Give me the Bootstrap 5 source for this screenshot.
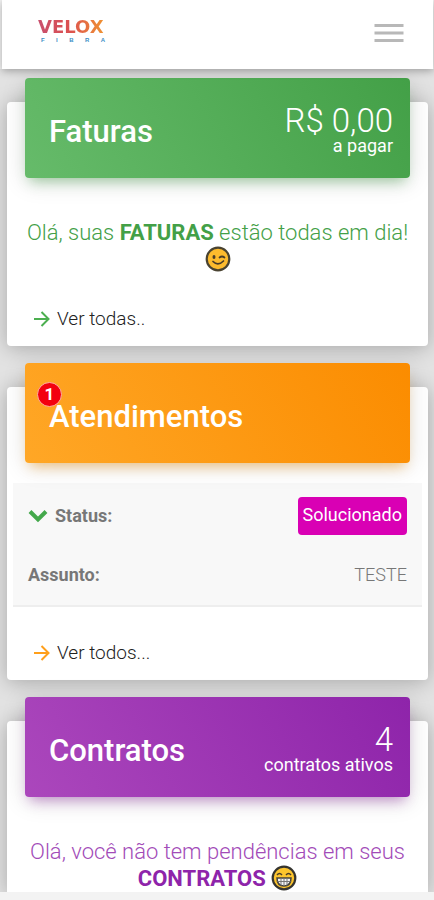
<!DOCTYPE html>
<html lang="pt-BR">
<head>
<meta charset="utf-8">
<meta name="viewport" content="width=device-width, initial-scale=1">
<title>Velox Fibra</title>
<link href="https://cdn.jsdelivr.net/npm/bootstrap@5.3.0/dist/css/bootstrap.min.css" rel="stylesheet">
<style>
  body { background: #f3f3f3; font-family: Roboto, "Liberation Sans", sans-serif; font-weight: 300; font-size: 20px; line-height: 24px; color: #333; }
  .topbar { margin: 0 1px 0 2px; padding: 18px 29px 21px 36px; background: #fff; box-shadow: 0 2px 8px rgba(0,0,0,.3); z-index: 2; }
  .brand { width: 70px; text-decoration: none; font-family: "DejaVu Sans", sans-serif; font-weight: 700; }
  .brand-name { font-size: 18px; line-height: 17px; background: linear-gradient(90deg, #c8506e, #dc5050 45%, #f29a2e); -webkit-background-clip: text; background-clip: text; color: transparent; }
  .brand-sub { font-family: "Liberation Sans", sans-serif; font-size: 6px; line-height: 6px; margin-top: 2px; color: #3d8fc6; padding: 0 3px; }
  .menu-btn { width: 30px; height: 30px; }
  .page { background: #e2e2e2; padding: 33px 6px 0 7px; overflow: hidden; }
  .panel { border: 0; border-radius: 4px; box-shadow: 0 2px 20px rgba(0,0,0,.26); margin-bottom: 41px; }
  .panel:last-child { margin-bottom: 0; border-radius: 4px 4px 0 0; }
  .panel-top { margin: -24px 18px 0; padding: 4px 17px 0 24px; min-height: 100px; border-radius: 4px; color: #fff; }
  .panel-top h2 { font-size: 31px; line-height: 36px; font-weight: 500; margin: 4px 0 0; }
  .top-green { background: linear-gradient(60deg, #66bb6a, #43a047); box-shadow: 0 4px 24px rgba(0,0,0,.14), 0 8px 12px -5px rgba(76,175,80,.45); }
  .top-orange { background: linear-gradient(60deg, #ffa726, #fb8c00); box-shadow: 0 4px 24px rgba(0,0,0,.12), 0 8px 12px -5px rgba(255,152,0,.45); }
  .top-purple { background: linear-gradient(60deg, #ab47bc, #8e24aa); box-shadow: 0 4px 24px rgba(0,0,0,.14), 0 8px 12px -5px rgba(156,39,176,.45); }
  .figure-num { font-size: 33px; line-height: 32px; }
  .figure-note { font-size: 18px; line-height: 18px; font-weight: 400; }
  .note { font-size: 22px; line-height: 26px; padding: 42px 18px 0; margin: 0; }
  .note b { font-weight: 700; }
  .note-green { color: #43a047; }
  .note-purple { color: #a24bb8; }
  .note-purple b { color: #8e24aa; }
  .emoji { width: 26px; height: 26px; vertical-align: -5px; }
  .more { color: #222; text-decoration: none; padding: 34px 27px 15px; font-size: 19px; line-height: 24px; }
  .more svg { width: 16px; height: 18px; margin-right: 7px; }
  .count { position: absolute; left: 12px; top: 19px; width: 25px; height: 25px; border-radius: 50%; background: #f3000f; border: 1px solid #ffb0a0; font-size: 17px; line-height: 23px; font-weight: 700; }
  .ticket { margin: 20px 6px 0; padding: 14px 15px 18px; background: #f8f8f8; border-bottom: 2px solid #eee; color: #777; font-size: 18px; }
  .ticket dt { font-weight: 700; }
  .ticket dd { margin: 0; }
  .ticket svg { width: 20px; height: 14px; margin-right: 7px; }
  .ticket .state { background: #d900b4; color: #fff; border-radius: 4px; padding: 6px 5px 8px; font-weight: 400; }
</style>
</head>
<body>
<nav class="topbar d-flex justify-content-between align-items-start position-relative">
  <a class="brand d-flex flex-column" href="#">
    <span class="brand-name">VELOX</span>
    <span class="brand-sub d-flex justify-content-between"><span>F</span><span>I</span><span>B</span><span>R</span><span>A</span></span>
  </a>
  <button class="menu-btn btn p-0 border-0 d-flex align-items-center" type="button" aria-label="Menu">
    <svg width="30" height="20" viewBox="0 0 30 20"><path d="M.5 2.500h29M.5 10h29M.5 17.500h29" stroke="#b8b8b8" stroke-width="3.200"/></svg>
  </button>
</nav>
<main class="page">
  <section class="panel card">
    <div class="panel-top top-green d-flex justify-content-between align-items-center">
      <h2>Faturas</h2>
      <div class="text-end"><div class="figure-num">R$ 0,00</div><div class="figure-note">a pagar</div></div>
    </div>
    <p class="note note-green text-center">Olá, suas <b>FATURAS</b> estão todas em dia!
      <svg class="emoji" viewBox="0 0 26 26" role="img" aria-label="Piscadela"><circle cx="13" cy="13" r="11.300" fill="#fdbb2d" stroke="#494331" stroke-width="2.200"/><ellipse cx="9" cy="11" rx="1.500" ry="2" fill="#493c28"/><path d="M14.500 11.500q2.500-2 5 0M8 15.500q5 5 10.500-.5" fill="none" stroke="#493c28" stroke-width="1.700" stroke-linecap="round"/></svg>
    </p>
    <a class="more d-flex align-items-center" href="#"><svg viewBox="0 0 16 18"><path d="M0 9h14M7.500 2l7 7-7 7" fill="none" stroke="#4caf50" stroke-width="2"/></svg>Ver todas..</a>
  </section>
  <section class="panel card">
    <div class="panel-top top-orange d-flex align-items-center position-relative">
      <h2>Atendimentos</h2>
      <span class="count text-center">1</span>
    </div>
    <dl class="ticket">
      <div class="d-flex justify-content-between align-items-center">
        <dt class="d-flex align-items-center"><svg viewBox="0 0 20 14"><path d="M2 2.500l8 8 8-8" fill="none" stroke="#43a84b" stroke-width="4"/></svg>Status:</dt>
        <dd class="state">Solucionado</dd>
      </div>
      <div class="d-flex justify-content-between align-items-center pt-4 mt-1">
        <dt>Assunto:</dt><dd>TESTE</dd>
      </div>
    </dl>
    <a class="more d-flex align-items-center" href="#"><svg viewBox="0 0 16 18"><path d="M0 9h14M7.500 2l7 7-7 7" fill="none" stroke="#ff9f1a" stroke-width="2"/></svg>Ver todos...</a>
  </section>
  <section class="panel card">
    <div class="panel-top top-purple d-flex justify-content-between align-items-center">
      <h2>Contratos</h2>
      <div class="text-end"><div class="figure-num">4</div><div class="figure-note">contratos ativos</div></div>
    </div>
    <p class="note note-purple text-center">Olá, você não tem pendências em seus <b>CONTRATOS</b>
      <svg class="emoji" viewBox="0 0 26 26" role="img" aria-label="Sorriso"><circle cx="13" cy="13" r="11.300" fill="#fdc52d" stroke="#35342f" stroke-width="2.200"/><path d="M6 10q2.500-3 5 0M15 10q2.500-3 5 0" fill="none" stroke="#493c28" stroke-width="1.500"/><path d="M6 13h14q0 8-7 8t-7-8z" fill="#f4f4f4" stroke="#44423c" stroke-width="1.500"/><path d="M6.500 16.500h13M10 13v7.500M13 13v8M16 13v7.500" stroke="#777" stroke-width="1"/></svg>
    </p>
  </section>
</main>
<script src="https://cdn.jsdelivr.net/npm/bootstrap@5.3.0/dist/js/bootstrap.bundle.min.js"></script>
</body>
</html>
